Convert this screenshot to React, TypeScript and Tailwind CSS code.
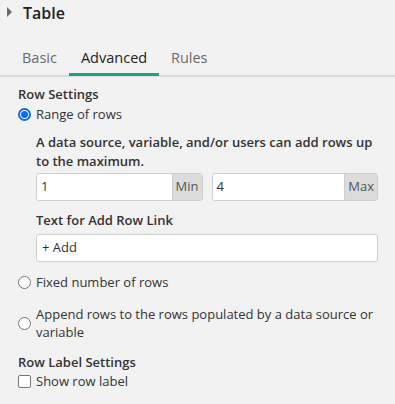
import React from "react";

function Radio({ checked }: { checked?: boolean }) {
  return (
    <span
      className={
        "inline-flex w-[13px] h-[13px] rounded-full shrink-0 items-center justify-center bg-white " +
        (checked ? "border-2 border-[#0a6cf0]" : "border border-[#767676]")
      }
    >
      {checked ? <span className="w-[7px] h-[7px] rounded-full bg-[#0a6cf0]" /> : null}
    </span>
  );
}

export default function App() {
  return (
    <div
      className="w-[395px] h-[404px] bg-[#f2f2f2] text-[#333] overflow-hidden"
      style={{ fontFamily: '"Open Sans", "Noto Sans", sans-serif' }}
    >
      {/* header */}
      <div className="flex items-center h-[26px] pl-[7px]">
        <svg width="5" height="10" viewBox="0 0 5 10" className="mr-[11px] mb-[2px]">
          <path d="M0 0 L5 5 L0 10 Z" fill="#6b6b6b" />
        </svg>
        <span className="text-[16px] font-semibold text-[#222] leading-[20px]">Table</span>
      </div>

      {/* tabs */}
      <div className="flex pl-[10px] mt-[20px] border-b-2 border-[#dcdcdc] h-[31px]">
        <div className="px-3 text-[14.5px] leading-[24px] text-[#6a6a6a]">Basic</div>
        <div className="px-3 text-[14.5px] leading-[24px] text-[#222] border-b-[3px] border-[#14a38b] mb-[-1px] w-[90px]">
          Advanced
        </div>
        <div className="px-3 text-[14.5px] leading-[24px] text-[#6a6a6a]">Rules</div>
      </div>

      {/* content */}
      <div className="pl-[18px] pr-[17px] text-[13px]">
        <div className="font-semibold leading-[19px] mt-[8px]">Row Settings</div>
        <label className="flex items-center gap-[5px] leading-[19px] mt-[1px]">
          <Radio checked />
          <span>Range of rows</span>
        </label>

        <div className="pl-[18px] mt-[9px]">
          <div className="font-semibold leading-[19px]">
            A data source, variable, and/or users can add rows up to the maximum.
          </div>
          <div className="flex gap-[9px] mt-[2px]">
            <div className="flex w-[167px] h-[28px] border border-[#cfcfcf] rounded-[3px] overflow-hidden">
              <div className="flex-1 bg-white pl-[4px] flex items-center text-[#333]">1</div>
              <div className="bg-[#dcdcdc] border-l border-[#cfcfcf] px-[3px] flex items-center text-[#555]">Min</div>
            </div>
            <div className="flex w-[167px] h-[28px] border border-[#cfcfcf] rounded-[3px] overflow-hidden">
              <div className="flex-1 bg-white pl-[4px] flex items-center text-[#333]">4</div>
              <div className="bg-[#dcdcdc] border-l border-[#cfcfcf] px-[3px] flex items-center text-[#555]">Max</div>
            </div>
          </div>
          <div className="font-semibold leading-[19px] mt-[10px]">Text for Add Row Link</div>
          <div className="mt-[4px] w-[342px] h-[28px] bg-white border border-[#cfcfcf] rounded-[3px] flex items-center pl-[5px]">
            + Add
          </div>
        </div>

        <label className="flex items-center gap-[5px] leading-[19px] mt-[11px]">
          <Radio />
          <span>Fixed number of rows</span>
        </label>
        <label className="flex items-center gap-[5px] leading-[18px] mt-[13px]">
          <Radio />
          <span>Append rows to the rows populated by a data source or variable</span>
        </label>

        <div className="font-semibold leading-[19px] mt-[12px]">Row Label Settings</div>
        <label className="flex items-center gap-[5px] leading-[19px]">
          <span className="w-[13px] h-[13px] border border-[#767676] rounded-[2px] bg-white shrink-0" />
          <span>Show row label</span>
        </label>
      </div>
    </div>
  );
}
